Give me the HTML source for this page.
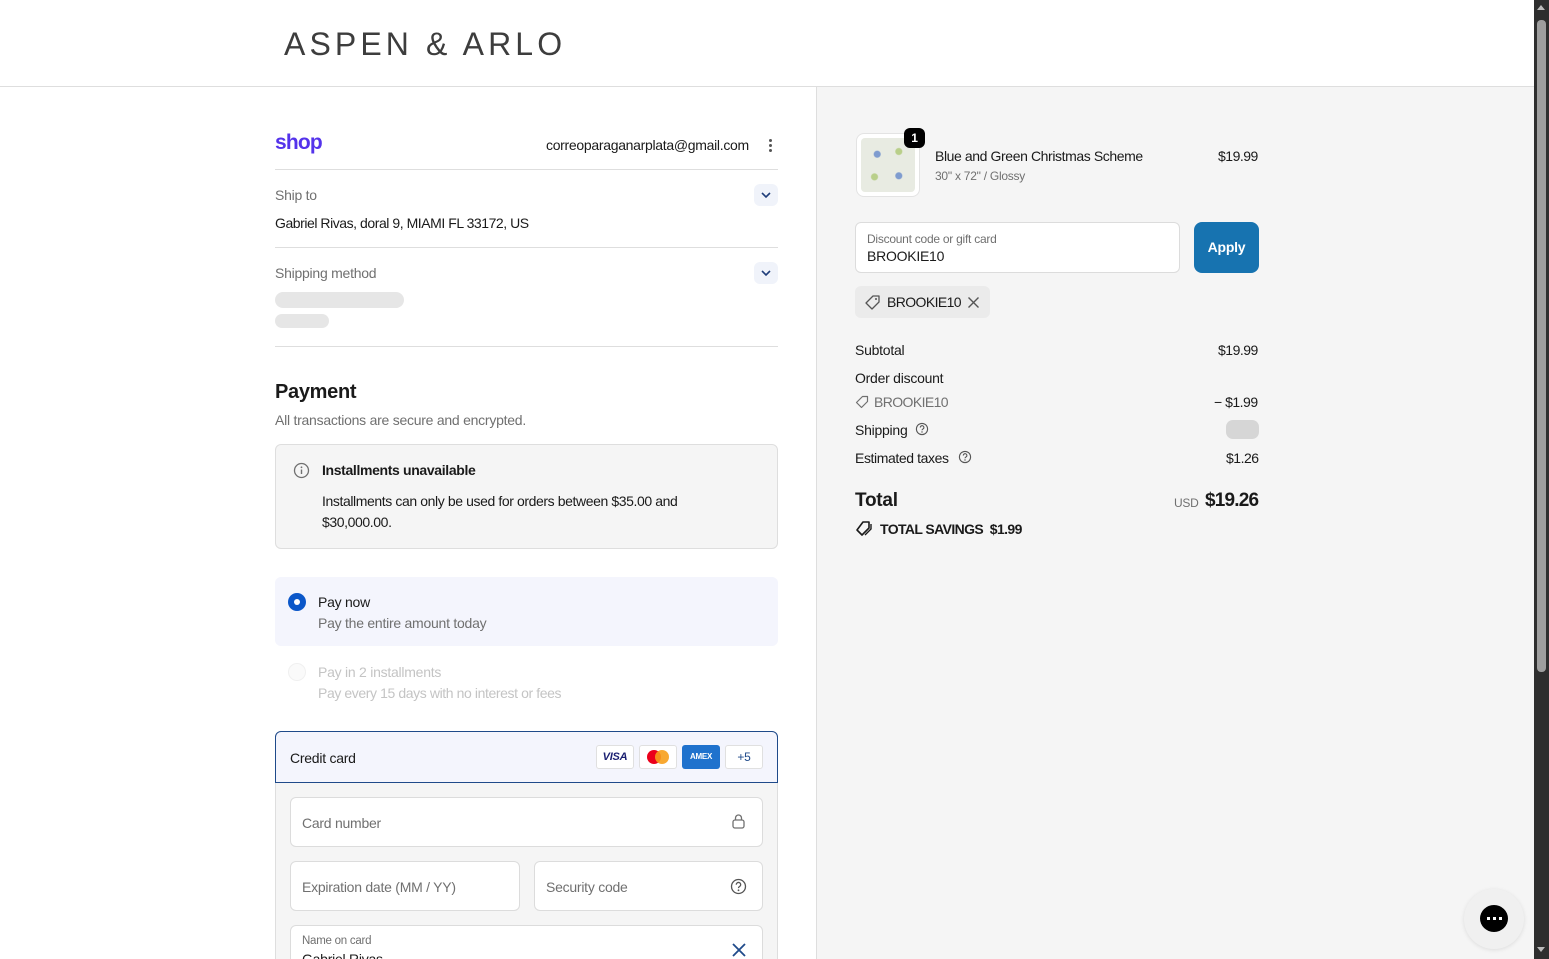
<!DOCTYPE html>
<html><head><meta charset="utf-8"><style>
*{box-sizing:border-box;margin:0;padding:0}
html{overflow:hidden;width:1549px;height:959px}
body{width:1549px;height:959px;overflow:hidden;font-family:"Liberation Sans",sans-serif;color:#1a1a1a;font-size:14px;letter-spacing:-0.25px;background:#fff;position:relative}
.a{position:absolute;white-space:nowrap}
.hdr{left:0;top:0;width:1534px;height:87px;border-bottom:1px solid #dedede;background:#fff}
.logo{left:284px;top:26px;font-size:32px;letter-spacing:4.1px;color:#3d3d3d}
.right{left:816px;top:87px;width:718px;height:872px;background:#f5f5f5;border-left:1px solid #dedede}
.sb{left:1534px;top:0;width:15px;height:959px;background:#2e2e2e}
.thumb{left:1537px;top:20px;width:9px;height:652px;background:#9e9e9e;border-radius:4px}
.line{height:1px;background:#dedede;left:275px;width:503px}
.muted{color:#707070}
.chev{width:24px;height:22px;border-radius:6px;background:#f0f3fa}
.sk{background:#e6e6e6;border-radius:8px}
.inp{background:#fff;border:1px solid #dcdcdc;border-radius:6px}
</style></head><body>
<div class="a hdr"></div>
<div class="a logo">ASPEN &amp; ARLO</div>
<div class="a right"></div>
<div class="a sb"></div><div class="a thumb"></div>
<div class="a" style="left:1537px;top:5px;width:0;height:0;border-left:4px solid transparent;border-right:4px solid transparent;border-bottom:5px solid #bbb"></div>
<div class="a" style="left:1537px;top:947px;width:0;height:0;border-left:4px solid transparent;border-right:4px solid transparent;border-top:5px solid #bbb"></div>

<div class="a" style="left:275px;top:131px;font-size:21px;font-weight:bold;color:#5433eb;letter-spacing:-0.8px">shop</div>
<div class="a" style="left:546px;top:137px;font-size:14px;letter-spacing:-0.3px">correoparaganarplata@gmail.com</div>
<div class="a" style="left:769px;top:139px;width:3px;height:3px;background:#555;border-radius:50%;box-shadow:0 5px 0 #555,0 10px 0 #555"></div>
<div class="a line" style="top:169px"></div>
<div class="a muted" style="left:275px;top:187px">Ship to</div>
<div class="a chev" style="left:754px;top:184px"></div>
<svg class="a" style="left:760px;top:190px" width="12" height="10"><path d="M2 3l4 4 4-4" stroke="#1f3d7a" stroke-width="1.6" fill="none"/></svg>
<div class="a" style="left:275px;top:215px;letter-spacing:-0.45px">Gabriel Rivas, doral 9, MIAMI FL 33172, US</div>
<div class="a line" style="top:247px"></div>
<div class="a muted" style="left:275px;top:265px">Shipping method</div>
<div class="a chev" style="left:754px;top:262px"></div>
<svg class="a" style="left:760px;top:268px" width="12" height="10"><path d="M2 3l4 4 4-4" stroke="#1f3d7a" stroke-width="1.6" fill="none"/></svg>
<div class="a sk" style="left:275px;top:292px;width:129px;height:16px"></div>
<div class="a sk" style="left:275px;top:314px;width:54px;height:14px"></div>
<div class="a line" style="top:346px"></div>

<div class="a" style="left:275px;top:381px;font-size:20px;font-weight:bold;letter-spacing:-0.3px">Payment</div>
<div class="a muted" style="left:275px;top:412px">All transactions are secure and encrypted.</div>
<div class="a" style="left:275px;top:444px;width:503px;height:105px;background:#f5f5f5;border:1px solid #dedede;border-radius:6px"></div>
<svg class="a" style="left:293px;top:462px" width="17" height="17"><circle cx="8.5" cy="8.5" r="7" stroke="#707070" stroke-width="1.3" fill="none"/><path d="M8.5 7.5v4.5" stroke="#707070" stroke-width="1.4"/><circle cx="8.5" cy="5.3" r="0.9" fill="#707070"/></svg>
<div class="a" style="left:322px;top:462px;font-weight:bold;letter-spacing:-0.35px">Installments unavailable</div>
<div class="a" style="left:322px;top:491px;line-height:21px;letter-spacing:-0.4px">Installments can only be used for orders between $35.00 and<br>$30,000.00.</div>

<div class="a" style="left:275px;top:577px;width:503px;height:69px;background:#f4f5fd;border-radius:6px"></div>
<div class="a" style="left:288px;top:593px;width:18px;height:18px;border-radius:50%;background:#0b57c9"></div>
<div class="a" style="left:294px;top:599px;width:6px;height:6px;border-radius:50%;background:#fff"></div>
<div class="a" style="left:318px;top:594px">Pay now</div>
<div class="a muted" style="left:318px;top:615px">Pay the entire amount today</div>
<div class="a" style="left:288px;top:663px;width:18px;height:18px;border-radius:50%;background:#fafafa;border:1px solid #f0f0f0"></div>
<div class="a" style="left:318px;top:664px;color:#c4c4c4">Pay in 2 installments</div>
<div class="a" style="left:318px;top:685px;color:#c4c4c4;letter-spacing:-0.4px">Pay every 15 days with no interest or fees</div>

<div class="a" style="left:275px;top:731px;width:503px;height:240px;background:#f5f5f5;border:1px solid #dedede;border-radius:6px"></div>
<div class="a" style="left:275px;top:731px;width:503px;height:52px;background:#f4f5fd;border:1px solid #1f4a8a;border-radius:6px 6px 0 0"></div>
<div class="a" style="left:290px;top:750px">Credit card</div>
<div class="a" style="left:596px;top:745px;width:38px;height:24px;background:#fff;border:1px solid #e0e0e0;border-radius:3px;font-size:11px;font-weight:bold;font-style:italic;color:#1a1f71;text-align:center;line-height:22px">VISA</div>
<div class="a" style="left:639px;top:745px;width:38px;height:24px;background:#fff;border:1px solid #e0e0e0;border-radius:3px"></div>
<div class="a" style="left:647px;top:750px;width:14px;height:14px;border-radius:50%;background:#eb001b"></div>
<div class="a" style="left:655px;top:750px;width:14px;height:14px;border-radius:50%;background:#f79e1b;opacity:.9"></div>
<div class="a" style="left:682px;top:745px;width:38px;height:24px;background:#1f72cd;border-radius:3px;font-size:8px;font-weight:bold;color:#fff;text-align:center;line-height:24px">AMEX</div>
<div class="a" style="left:725px;top:745px;width:38px;height:24px;background:#fff;border:1px solid #e0e0e0;border-radius:3px;font-size:12px;color:#1f4a8a;text-align:center;line-height:22px">+5</div>

<div class="a inp" style="left:290px;top:797px;width:473px;height:50px"></div>
<div class="a muted" style="left:302px;top:815px">Card number</div>
<svg class="a" style="left:731px;top:813px" width="15" height="17"><rect x="2" y="7" width="11" height="8" rx="2" stroke="#707070" stroke-width="1.3" fill="none"/><path d="M4.5 7V5a3 3 0 016 0v2" stroke="#707070" stroke-width="1.3" fill="none"/></svg>
<div class="a inp" style="left:290px;top:861px;width:230px;height:50px"></div>
<div class="a muted" style="left:302px;top:879px">Expiration date (MM / YY)</div>
<div class="a inp" style="left:534px;top:861px;width:229px;height:50px"></div>
<div class="a muted" style="left:546px;top:879px">Security code</div>
<svg class="a" style="left:730px;top:878px" width="17" height="17"><circle cx="8.5" cy="8.5" r="7" stroke="#555" stroke-width="1.3" fill="none"/><path d="M6.3 6.7a2.2 2.2 0 114 1.2c-.8.6-1.8.9-1.8 2.2" stroke="#555" stroke-width="1.3" fill="none"/><circle cx="8.5" cy="12.3" r=".9" fill="#555"/></svg>
<div class="a inp" style="left:290px;top:925px;width:473px;height:50px"></div>
<div class="a muted" style="left:302px;top:935px;font-size:11.5px">Name on card</div>
<div class="a" style="left:302px;top:951px">Gabriel Rivas</div>
<svg class="a" style="left:731px;top:942px" width="16" height="16"><path d="M2 2l12 12M14 2L2 14" stroke="#1f4a8a" stroke-width="1.8"/></svg>

<!-- right -->
<div class="a" style="left:856px;top:133px;width:64px;height:64px;border-radius:8px;background:#fff;border:1px solid #e3e3e3"></div>
<div class="a" style="left:861px;top:138px;width:54px;height:54px;border-radius:4px;background:radial-gradient(circle at 30% 30%,#7f9ccf 0 3px,transparent 4px),radial-gradient(circle at 70% 70%,#7f9ccf 0 3px,transparent 4px),radial-gradient(circle at 70% 25%,#b9cf8a 0 3px,transparent 4px),radial-gradient(circle at 25% 72%,#b9cf8a 0 3px,transparent 4px),#e8ebe2"></div>
<div class="a" style="left:904px;top:128px;width:21px;height:20px;border-radius:6px;background:#000;color:#fff;font-size:12px;font-weight:bold;text-align:center;line-height:20px">1</div>
<div class="a" style="left:935px;top:148px;letter-spacing:-0.4px">Blue and Green Christmas Scheme</div>
<div class="a muted" style="left:935px;top:169px;font-size:12px">30" x 72" / Glossy</div>
<div class="a" style="left:1218px;top:148px;letter-spacing:-0.5px">$19.99</div>

<div class="a inp" style="left:855px;top:222px;width:325px;height:51px"></div>
<div class="a muted" style="left:867px;top:232px;font-size:12px">Discount code or gift card</div>
<div class="a" style="left:867px;top:248px">BROOKIE10</div>
<div class="a" style="left:1194px;top:222px;width:65px;height:51px;background:#1773b0;border-radius:8px;color:#fff;font-weight:bold;text-align:center;line-height:51px">Apply</div>
<div class="a" style="left:855px;top:286px;width:135px;height:32px;background:#ebebeb;border-radius:6px"></div>
<svg class="a" style="left:864px;top:294px" width="17" height="17"><path d="M9 2h6v6l-7 7-6-6z" stroke="#555" stroke-width="1.3" fill="none" stroke-linejoin="round"/><circle cx="12" cy="5" r="1" fill="#555"/></svg>
<div class="a" style="left:887px;top:294px;letter-spacing:-0.6px">BROOKIE10</div>
<svg class="a" style="left:967px;top:296px" width="13" height="13"><path d="M1.5 1.5l10 10M11.5 1.5l-10 10" stroke="#555" stroke-width="1.4"/></svg>

<div class="a" style="left:855px;top:342px">Subtotal</div><div class="a" style="left:1218px;top:342px;letter-spacing:-0.5px">$19.99</div>
<div class="a" style="left:855px;top:370px">Order discount</div>
<svg class="a" style="left:855px;top:395px" width="14" height="14"><path d="M7.5 1.5h5v5l-6 6-5-5z" stroke="#707070" stroke-width="1.2" fill="none" stroke-linejoin="round"/></svg>
<div class="a muted" style="left:874px;top:394px;letter-spacing:-0.6px">BROOKIE10</div><div class="a" style="left:1214px;top:394px;letter-spacing:-0.5px">− $1.99</div>
<div class="a" style="left:855px;top:422px">Shipping</div>
<svg class="a" style="left:915px;top:422px" width="14" height="14"><circle cx="7" cy="7" r="5.6" stroke="#555" stroke-width="1.1" fill="none"/><path d="M5.3 5.6a1.8 1.8 0 113.2 1c-.6.5-1.5.7-1.5 1.7" stroke="#555" stroke-width="1.1" fill="none"/><circle cx="7" cy="10" r=".7" fill="#555"/></svg>
<div class="a" style="left:1226px;top:420px;width:33px;height:19px;background:#d6d6d6;border-radius:7px"></div>
<div class="a" style="left:855px;top:450px;letter-spacing:-0.4px">Estimated taxes</div>
<svg class="a" style="left:958px;top:450px" width="14" height="14"><circle cx="7" cy="7" r="5.6" stroke="#555" stroke-width="1.1" fill="none"/><path d="M5.3 5.6a1.8 1.8 0 113.2 1c-.6.5-1.5.7-1.5 1.7" stroke="#555" stroke-width="1.1" fill="none"/><circle cx="7" cy="10" r=".7" fill="#555"/></svg>
<div class="a" style="left:1226px;top:450px;letter-spacing:-0.5px">$1.26</div>
<div class="a" style="left:855px;top:490px;font-size:19px;font-weight:bold">Total</div>
<div class="a muted" style="left:1174px;top:496px;font-size:12px">USD</div>
<div class="a" style="left:1205px;top:490px;font-size:19px;font-weight:bold;letter-spacing:-0.8px">$19.26</div>
<svg class="a" style="left:855px;top:520px" width="18" height="17"><path d="M8 2h6v6l-7 7-5-5z" stroke="#1a1a1a" stroke-width="1.6" fill="none" stroke-linejoin="round"/><path d="M16 4v5l-6 6" stroke="#1a1a1a" stroke-width="1.4" fill="none"/></svg>
<div class="a" style="left:880px;top:521px;font-weight:bold;letter-spacing:-0.6px">TOTAL SAVINGS&nbsp; $1.99</div>

<div class="a" style="left:1464px;top:889px;width:60px;height:60px;border-radius:50%;background:#f0f0f0;box-shadow:0 1px 4px rgba(0,0,0,.1)"></div>
<div class="a" style="left:1480px;top:905px;width:28px;height:27px;border-radius:50%;background:#000"></div>
<div class="a" style="left:1487px;top:917px;width:3px;height:3px;background:#fff;box-shadow:6px 0 #fff,12px 0 #fff"></div>
</body></html>
